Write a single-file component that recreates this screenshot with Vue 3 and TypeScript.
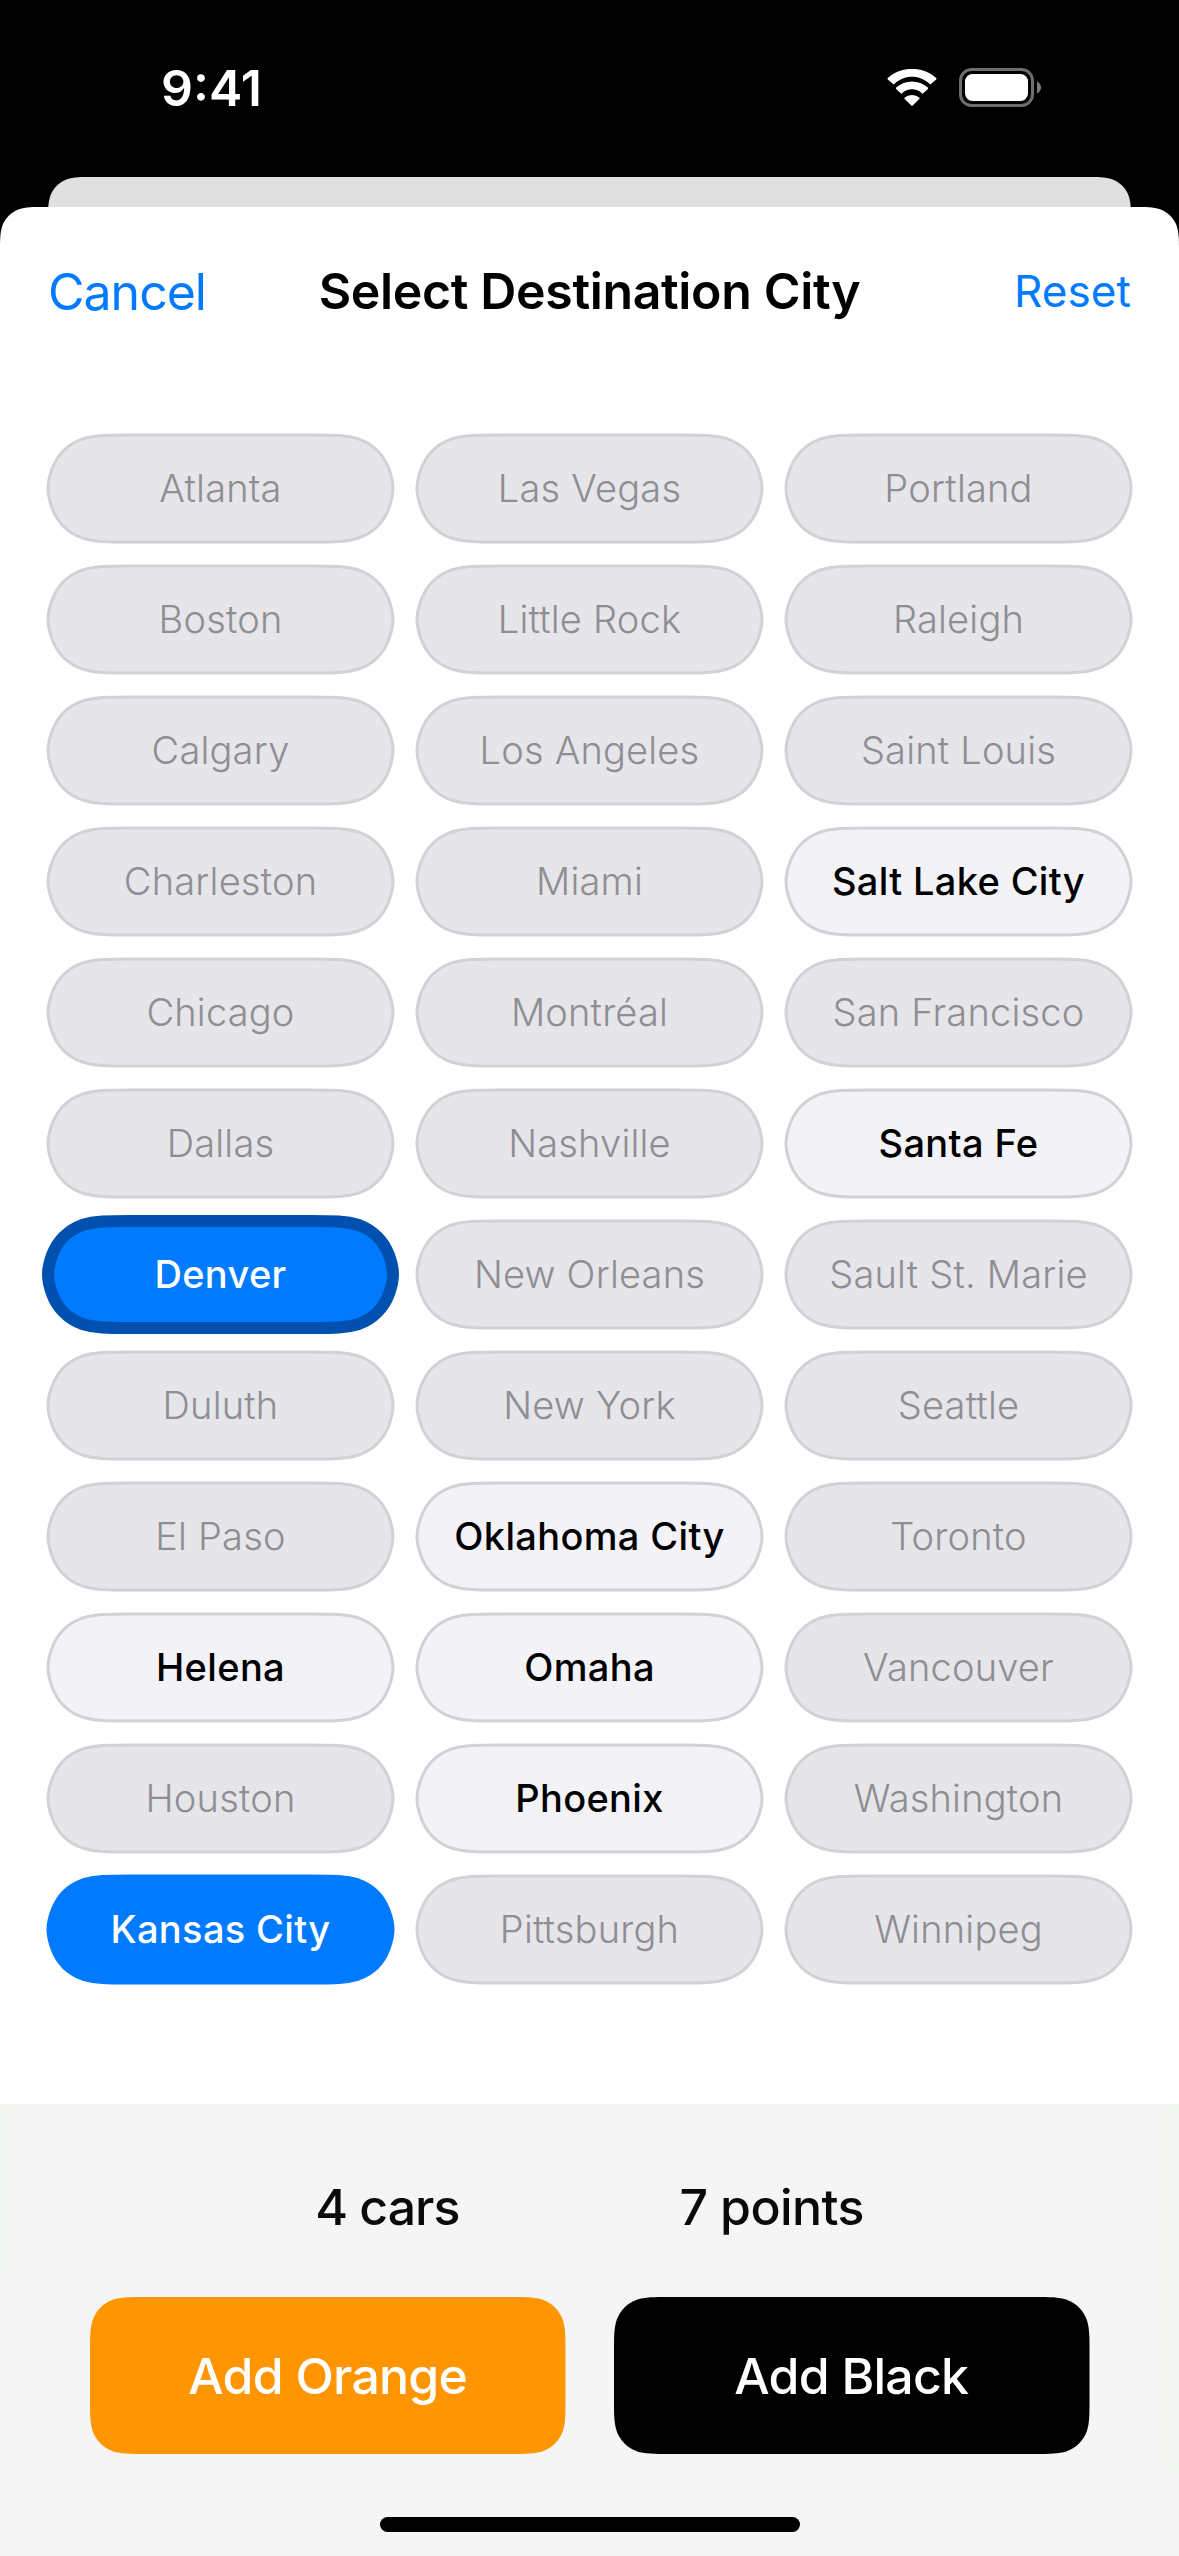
<script setup lang="ts">
type CityState = 'disabled' | 'open' | 'selected' | 'origin'

interface City {
  name: string
  state: CityState
}

const names: string[] = [
  'Atlanta', 'Boston', 'Calgary', 'Charleston', 'Chicago', 'Dallas',
  'Denver', 'Duluth', 'El Paso', 'Helena', 'Houston', 'Kansas City',
  'Las Vegas', 'Little Rock', 'Los Angeles', 'Miami', 'Montréal', 'Nashville',
  'New Orleans', 'New York', 'Oklahoma City', 'Omaha', 'Phoenix', 'Pittsburgh',
  'Portland', 'Raleigh', 'Saint Louis', 'Salt Lake City', 'San Francisco', 'Santa Fe',
  'Sault St. Marie', 'Seattle', 'Toronto', 'Vancouver', 'Washington', 'Winnipeg',
]

const special: Record<string, CityState> = {
  Denver: 'origin',
  'Kansas City': 'selected',
  Helena: 'open',
  'Oklahoma City': 'open',
  Omaha: 'open',
  Phoenix: 'open',
  'Salt Lake City': 'open',
  'Santa Fe': 'open',
}

const cities: City[] = names.map((name) => ({ name, state: special[name] ?? 'disabled' }))

// Rounded rectangle with continuous corners; the curve is shortened on a side too small for it.
function smoothRect(w: number, h: number, r: number): string {
  const long = 1.528665 * r
  const tall = Math.min(long, h / 2)
  const squeezed = tall < long
  const c1 = squeezed ? 0.741 * r : 0.8684 * r
  const c2 = squeezed ? 0.868 * r : 1.0885 * r
  const cx = squeezed ? 0.035 * r : 0
  const a = 1.0885 * r
  const b = 0.8684 * r
  const c = 0.6315 * r
  const d = 0.0749 * r
  const e = 0.3728 * r
  const f = 0.1691 * r
  return [
    `M${long} 0H${w - long}`,
    `C${w - a} 0 ${w - b} 0 ${w - c} ${d}`,
    `C${w - e} ${f} ${w - f} ${e} ${w - d} ${c}`,
    `C${w - cx} ${c1} ${w} ${c2} ${w} ${tall}`,
    `V${h - tall}`,
    `C${w} ${h - c2} ${w - cx} ${h - c1} ${w - d} ${h - c}`,
    `C${w - f} ${h - e} ${w - e} ${h - f} ${w - c} ${h - d}`,
    `C${w - b} ${h} ${w - a} ${h} ${w - long} ${h}`,
    `H${long}`,
    `C${a} ${h} ${b} ${h} ${c} ${h - d}`,
    `C${e} ${h - f} ${f} ${h - e} ${d} ${h - c}`,
    `C${cx} ${h - c1} 0 ${h - c2} 0 ${h - tall}`,
    `V${tall}`,
    `C0 ${c2} ${cx} ${c1} ${d} ${c}`,
    `C${f} ${e} ${e} ${f} ${c} ${d}`,
    `C${b} 0 ${a} 0 ${long} 0Z`,
  ].join('')
}

const pillPath = smoothRect(345, 107, 54)
const actionPath = smoothRect(475.5, 157, 36)
const backPath = smoothRect(1083, 200, 30)
const sheetPath = smoothRect(1179, 400, 30)
</script>

<template>
  <div class="screen">
    <header class="status">
      <span class="time">9:41</span>
      <div class="indicators">
        <svg class="wifi" width="52" height="38" viewBox="0 0 52 38">
          <path d="M26 7.8C32.8 7.8 39 10.4 43.6 15C44 15.4 44.6 15.4 44.9 15L50.2 10.4C50.6 10 50.6 9.4 50.2 9C36.6 -3.1 15.4 -3.1 1.800 9C1.400 9.400 1.400 10 1.800 10.400L7.100 15C7.400 15.400 8 15.400 8.400 15C13 10.400 19.200 7.800 26 7.800Z" />
          <path d="M26 20.300C29.700 20.300 33.300 21.700 36 24.200C36.400 24.600 37 24.600 37.300 24.200L41.900 20C42.300 19.600 42.300 19 41.900 18.600C33 10.600 19 10.600 10.100 18.600C9.700 19 9.700 19.600 10.100 20L14.700 24.200C15 24.600 15.600 24.600 16 24.200C18.700 21.700 22.300 20.300 26 20.300Z" />
          <path d="M33.300 29.900C33.700 29.500 33.700 28.900 33.200 28.600C29.100 25.100 22.900 25.100 18.800 28.600C18.300 28.900 18.300 29.500 18.700 29.900L25.300 36.600C25.700 37 26.300 37 26.700 36.600Z" />
        </svg>
        <svg class="battery" width="84" height="40" viewBox="0 0 84 40">
          <rect x="2.5" y="1.5" width="72" height="36" rx="11" fill="none" stroke="#6e6e6e" stroke-width="3" />
          <rect x="7" y="6" width="63" height="27" rx="7.500" fill="#fff" />
          <path d="M79 13.500V25.500C81.500 24.500 83 22.100 83 19.500C83 16.900 81.500 14.500 79 13.500Z" fill="#7a7a7a" />
        </svg>
      </div>
    </header>

    <div class="back-card">
      <svg class="shape" width="1083" height="30"><path :d="backPath" fill="#e0e0e0" /></svg>
    </div>

    <main class="sheet">
      <svg class="shape" width="1179" height="168"><path :d="sheetPath" fill="#fff" /></svg>
      <nav class="bar">
        <a class="cancel">Cancel</a>
        <h1 class="title">Select Destination City</h1>
        <a class="reset">Reset</a>
      </nav>

      <section class="cities">
        <button v-for="city in cities" :key="city.name" class="city" :class="city.state">
          <svg class="shape" width="345" height="107"><path :d="pillPath" /></svg>
          <span class="label">{{ city.name }}</span>
        </button>
      </section>

      <footer class="footer">
        <div class="stats">
          <span class="cars">4 cars</span>
          <span class="points">7 points</span>
        </div>
        <div class="actions">
          <button class="action orange">
            <svg class="shape" width="475.5" height="157"><path :d="actionPath" /></svg>
            <span class="label">Add Orange</span>
          </button>
          <button class="action black">
            <svg class="shape" width="475.5" height="157"><path :d="actionPath" /></svg>
            <span class="label">Add Black</span>
          </button>
        </div>
        <div class="home"></div>
      </footer>
    </main>
  </div>
</template>

<style>
body {
  background: #000;
}
</style>

<style scoped>
.screen {
  display: flex;
  flex-direction: column;
  width: 1179px;
  height: 2556px;
  overflow: hidden;
  background: #000;
  font-family: Inter, 'Liberation Sans', sans-serif;
  color: #000;
}

.status {
  display: flex;
  justify-content: space-between;
  box-sizing: border-box;
  height: 177px;
  padding: 58px 137px 0 161px;
  color: #fff;
}

.time {
  height: 60px;
  line-height: 60px;
  font-size: 50px;
  font-weight: 600;
  letter-spacing: 0;
}

.indicators {
  display: flex;
  gap: 20px;
  padding-top: 10px;
}

.wifi {
  margin-top: 1px;
  fill: #fff;
}

.battery {
  display: block;
}

.back-card {
  position: relative;
  height: 30px;
  margin: 0 48px;
}

.shape {
  position: absolute;
  top: 0;
  left: 0;
  display: block;
  overflow: visible;
}

.back-card .shape,
.sheet > .shape {
  overflow: hidden;
}

.sheet {
  position: relative;
  display: flex;
  flex: 1;
  flex-direction: column;
}

.bar {
  position: relative;
  display: flex;
  align-items: center;
  justify-content: space-between;
  height: 168px;
  padding: 0 48px;
}

.cancel,
.reset {
  flex: 1;
  color: #007aff;
}

.cancel {
  padding-top: 2px;
  font-size: 50px;
  letter-spacing: -1px;
}

.title {
  margin: 0;
  font-size: 50px;
  font-weight: 600;
  letter-spacing: -0.35px;
  white-space: nowrap;
}

.reset {
  font-size: 44px;
  letter-spacing: 0.1px;
  text-align: right;
}

.cities {
  display: grid;
  flex: 1;
  grid-template-rows: repeat(12, 107px);
  grid-template-columns: repeat(3, 345px);
  grid-auto-flow: column;
  gap: 24px;
  align-content: start;
  padding: 60px 48px 0;
  background: #fff;
}

.city,
.action {
  position: relative;
  display: flex;
  align-items: center;
  justify-content: center;
  padding: 0;
  border: 0;
  background: none;
  color: inherit;
  font: inherit;
}

.city .label,
.action .label {
  position: relative;
  white-space: nowrap;
}

.city {
  padding-bottom: 2px;
  font-size: 38px;
  font-weight: 500;
  letter-spacing: 0.35px;
}

.city path {
  fill: #f2f2f7;
  stroke: #d1d1d6;
  stroke-width: 3;
}

.disabled {
  color: #8e8e93;
  font-weight: 330;
  letter-spacing: 0.2px;
}

.disabled path {
  fill: #e5e5ea;
}

.selected,
.origin {
  color: #fff;
}

.selected path {
  fill: #007aff;
  stroke: #007aff;
}

.origin path {
  fill: #007aff;
  stroke: #0051af;
  stroke-width: 12;
}

.footer {
  display: flex;
  flex-direction: column;
  align-items: center;
  height: 452px;
  background:
    linear-gradient(90deg, #f3f6f2, #f5f5f5) 0 0 / 40px 170px no-repeat,
    linear-gradient(270deg, #f3f6f2, #f5f5f5) 100% 0 / 40px 370px no-repeat,
    #f5f5f5;
}

.stats {
  display: flex;
  justify-content: center;
  gap: 220px;
  height: 60px;
  padding-top: 73px;
  line-height: 60px;
  font-size: 50px;
  font-weight: 500;
  letter-spacing: -1px;
  color: #0a0a0a;
}

.points {
  letter-spacing: -0.6px;
}

.actions {
  display: flex;
  gap: 48px;
  margin-top: 60px;
}

.action {
  width: 475.5px;
  height: 157px;
  color: #fff;
  font-size: 50px;
  font-weight: 500;
  letter-spacing: -0.75px;
}

.orange path {
  fill: #ff9500;
}

.black path {
  fill: #000;
}

.home {
  width: 420px;
  height: 15px;
  margin-top: 63px;
  border-radius: 8px;
  background: #000;
}
</style>
